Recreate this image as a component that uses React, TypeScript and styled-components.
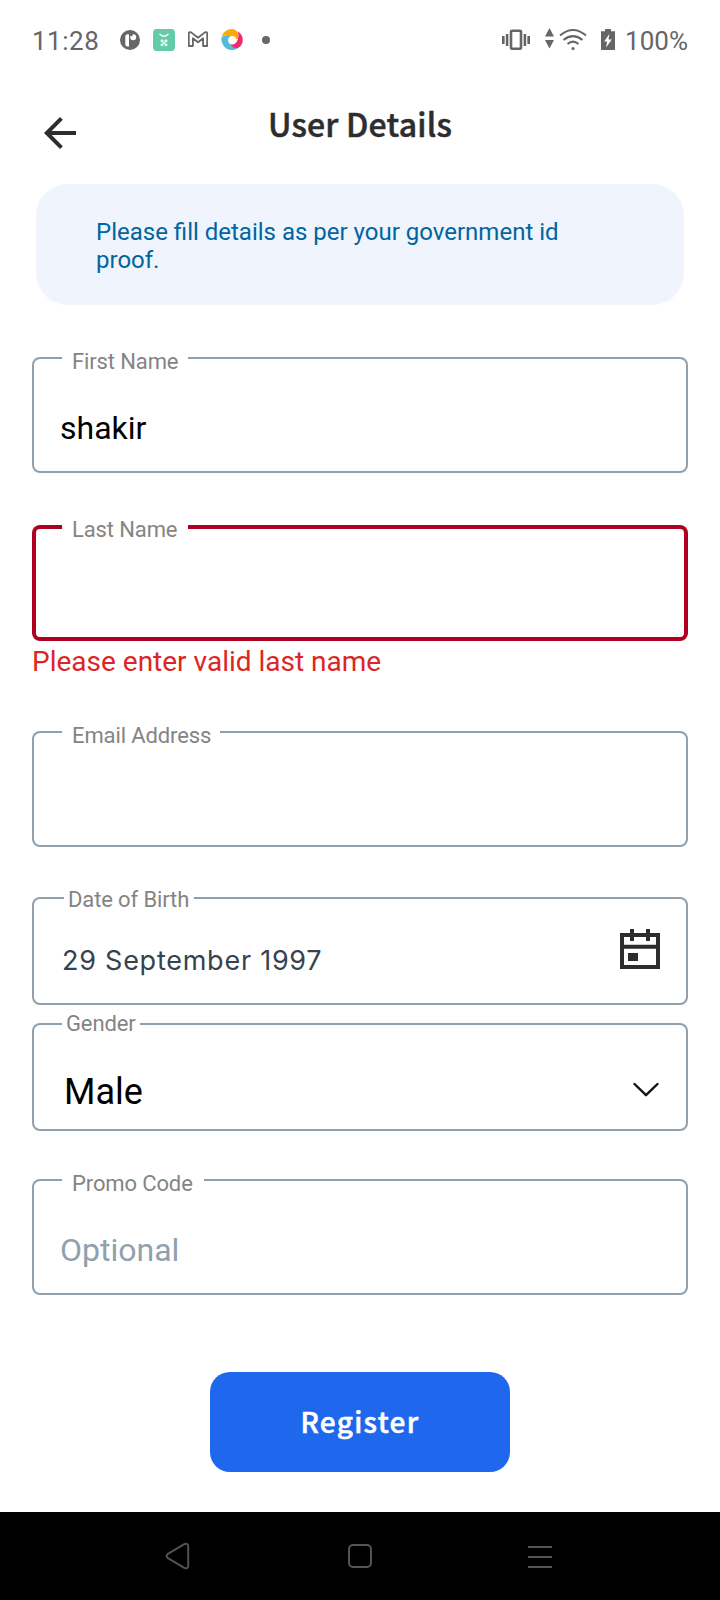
import React from "react";
import styled, { createGlobalStyle } from "styled-components";

const GlobalStyle = createGlobalStyle`
  * { box-sizing: border-box; }
  body { margin: 0; background: #fff; }
`;

const Screen = styled.div`
  width: 720px;
  height: 1600px;
  display: flex;
  flex-direction: column;
  background: #fff;
  font-family: Roboto, "Liberation Sans", sans-serif;
  overflow: hidden;
`;

const StatusBar = styled.div`
  height: 80px;
  padding: 2px 32px 0 32px;
  display: flex;
  align-items: center;
  justify-content: space-between;
  color: #666;
  font-size: 26px;
  line-height: 30px;
`;

const StatusGroup = styled.div`
  display: flex;
  align-items: center;
`;

const Clock = styled.span`
  width: 88px;
  letter-spacing: 0.5px;
`;

const StatusIcon = styled.svg<{ $w: number; $gap: number }>`
  display: block;
  flex: none;
  width: ${(p) => p.$w}px;
  height: 22px;
  margin: 0 ${(p) => p.$gap}px 2px 0;
`;

const Header = styled.header`
  height: 104px;
  padding: 0 36px;
  display: grid;
  grid-template-columns: 48px 1fr 48px;
  align-items: start;
`;

const BackButton = styled.button`
  width: 48px;
  height: 48px;
  margin-top: 29px;
  padding: 0;
  border: 0;
  background: none;
`;

const Title = styled.h1`
  margin: 19px 0 0;
  text-align: center;
  font: 500 32px/48px "Noto Sans CJK SC", "Noto Sans", sans-serif;
  letter-spacing: 0.2px;
  -webkit-text-stroke: 0.5px #2d2d2d;
  color: #2d2d2d;
  white-space: nowrap;
`;

const Notice = styled.p`
  height: 121px;
  margin: 0 36px;
  padding: 34px 100px 0 60px;
  border-radius: 32px;
  background: #eff4fd;
  color: #0065a0;
  font-size: 24px;
  line-height: 28px;
`;

const Form = styled.form`
  flex: 1;
  padding: 52px 32px 0;
  display: flex;
  flex-direction: column;
`;

const Field = styled.div<{ $height: number; $after: number; $error?: boolean }>`
  position: relative;
  flex: none;
  height: ${(p) => p.$height}px;
  margin-bottom: ${(p) => p.$after}px;
  border-radius: 8px;
  box-shadow: inset 0 0 0 ${(p) => (p.$error ? "4px #b00020" : "2px #90a0ad")};
  display: flex;
  justify-content: space-between;
`;

const Label = styled.label<{ $left?: number; $top?: number; $pad?: number; $width: number }>`
  position: absolute;
  left: ${(p) => p.$left ?? 30}px;
  top: ${(p) => p.$top ?? -7}px;
  width: ${(p) => p.$width}px;
  padding-left: ${(p) => p.$pad ?? 10}px;
  background: #fff;
  color: #848484;
  font-size: 22px;
  line-height: 24px;
  letter-spacing: -0.12px;
  white-space: nowrap;
`;

const Value = styled.span<{ $muted?: boolean }>`
  padding: 51px 0 0 28px;
  font-size: 32px;
  line-height: 40px;
  color: ${(p) => (p.$muted ? "#90a0ad" : "#000")};
`;

const DateValue = styled.span`
  padding: 46px 0 0 30px;
  font: 400 27px/36px Inter, sans-serif;
  letter-spacing: 0.75px;
  color: #36424e;
`;

const SelectValue = styled.span`
  padding: 49px 0 0 32px;
  font-size: 36px;
  line-height: 40px;
  color: #000;
`;

const FieldIcon = styled.svg<{ $top: number; $right: number }>`
  flex: none;
  margin: ${(p) => p.$top}px ${(p) => p.$right}px 0 0;
`;

const ErrorText = styled.p`
  height: 90px;
  margin: 0;
  padding-top: 4px;
  font-size: 28px;
  line-height: 33px;
  color: #dc2626;
`;

const RegisterButton = styled.button`
  flex: none;
  align-self: center;
  width: 300px;
  height: 100px;
  padding: 0 0 2px;
  border: 0;
  border-radius: 20px;
  background: #1f67ed;
  color: #fff;
  font: 500 28px/40px "Noto Sans CJK SC", "Noto Sans", sans-serif;
  letter-spacing: 1.3px;
  -webkit-text-stroke: 0.5px #fff;
`;

const NavBar = styled.nav`
  flex: none;
  height: 88px;
  padding: 0 168px;
  background: #000;
  display: flex;
  align-items: center;
  justify-content: space-between;
`;

const NavIcon = styled.svg`
  width: 24px;
  height: 28px;
  overflow: visible;
  fill: none;
  stroke: #535353;
  stroke-width: 2;
  stroke-linejoin: round;
`;

export default function App() {
  return (
    <>
      <GlobalStyle />
      <Screen>
        <StatusBar>
          <StatusGroup>
            <Clock>11:28</Clock>
            <StatusIcon $w={20} $gap={13} viewBox="0 0 20 22">
              <circle cx="10" cy="11" r="10" fill="#666" />
              <path d="M9 5.2v12.3H7.6a2.3 2.3 0 0 1-2.3-2.3V7.5A2.3 2.3 0 0 1 7.6 5.2Z" fill="#fff" />
              <circle cx="13.2" cy="8.200" r="3" fill="#fff" />
              <circle cx="11.500" cy="6" r="1.200" fill="#666" />
            </StatusIcon>
            <StatusIcon $w={22} $gap={13} viewBox="0 0 22 22">
              <rect width="22" height="22" rx="4" fill="#63cba7" />
              <path d="M6.5 5Q11 9.5 15.5 5" fill="none" stroke="#fff" strokeWidth="1.5" />
              <g fill="#e9faf4">
                <circle cx="9" cy="11.800" r="1.5" />
                <circle cx="13" cy="11.800" r="1.5" />
                <circle cx="9" cy="15.800" r="1.5" />
                <circle cx="13" cy="15.800" r="1.5" />
                <circle cx="11" cy="13.8" r="1.2" />
              </g>
            </StatusIcon>
            <StatusIcon $w={20} $gap={13} viewBox="0 0 20 22">
              <path
                d="M.8 4.9Q.8 2.2 3.1 3.4L10 8.7l6.9-5.3q2.3-1.2 2.3 1.5V17h-4.1V9.3L10 13.3 4.9 9.3V17H.8Z"
                fill="#fff"
                stroke="#666"
                strokeWidth="1.8"
                strokeLinejoin="round"
              />
            </StatusIcon>
            <StatusIcon $w={22} $gap={19} viewBox="0 0 22 22">
              <path d="M.5 8C2 3 6 .2 10.500 0c4.500 0 7.500 3 7.500 10H11L8 7C5.500 5.800 3 6 .5 8Z" fill="#fcaa0b" />
              <path d="M16.800 2.200C20.500 4.500 22.500 8.500 21.500 13c-1 5-5.500 8-12 6.500L9.500 14H15c2.800-4 3-8 1.800-11.800Z" fill="#ee2b70" />
              <path d="M.2 9C2.500 6 6 5.500 9 7v7c1.500 3.500 4 5.200 7.500 5.500C10 23.500.5 20 .2 9Z" fill="#54bcd6" />
              <circle cx="11.200" cy="11.200" r="4.200" fill="#fff" />
            </StatusIcon>
            <StatusIcon $w={8} $gap={0} viewBox="0 0 8 22">
              <circle cx="4" cy="11" r="4" fill="#666" />
            </StatusIcon>
          </StatusGroup>
          <StatusGroup>
            <StatusIcon $w={28} $gap={15} viewBox="0 0 28 22" fill="#666">
              <rect x="9" y="1.800" width="10" height="18" rx="1" fill="none" stroke="#666" strokeWidth="2.600" />
              <path d="M0 7h2.600v8H0zM3.800 5h2.600v12H3.800zM21.600 5h2.600v12h-2.600zM25.400 7H28v8h-2.600z" />
            </StatusIcon>
            <StatusIcon $w={9} $gap={5} viewBox="0 0 9 22" overflow="visible">
              <path d="M0 7.500 4.500-1 9 7.500ZM0 11h9l-4.500 8.500Z" fill="#666" />
            </StatusIcon>
            <StatusIcon $w={28} $gap={14} viewBox="0 0 28 22" fill="none" stroke="#666" strokeWidth="2">
              <path d="M1 6.500Q14-4.500 27 6.500M4.500 11Q14 3.200 23.500 11M8.500 15Q14 10.200 19.500 15" />
              <circle cx="14" cy="19.500" r="1.600" fill="#666" stroke="none" />
            </StatusIcon>
            <StatusIcon $w={14} $gap={10} viewBox="0 0 14 22">
              <path d="M4 0h6v2.200h4V21H0V2.200h4Z" fill="#666" />
              <path d="M8.300 5 3.200 12.500h3L5 18.500l5.800-8H7.500Z" fill="#fff" />
            </StatusIcon>
            <span>100%</span>
          </StatusGroup>
        </StatusBar>

        <Header>
          <BackButton type="button" aria-label="Back">
            <svg width="48" height="48" viewBox="0 0 24 24" fill="#2d2d2d">
              <path d="M20 11H7.830l5.590-5.590L12 4l-8 8 8 8 1.410-1.410L7.830 13H20v-2z" />
            </svg>
          </BackButton>
          <Title>User Details</Title>
        </Header>

        <Notice>Please fill details as per your government id proof.</Notice>

        <Form>
          <Field $height={116} $after={52}>
            <Label $width={126}>First Name</Label>
            <Value>shakir</Value>
          </Field>
          <Field $height={116} $after={0} $error>
            <Label $width={126}>Last Name</Label>
          </Field>
          <ErrorText>Please enter valid last name</ErrorText>
          <Field $height={116} $after={50}>
            <Label $width={158}>Email Address</Label>
          </Field>
          <Field $height={108} $after={18}>
            <Label $left={32} $top={-9} $pad={4} $width={130}>Date of Birth</Label>
            <DateValue>29 September 1997</DateValue>
            <FieldIcon $top={32} $right={28} width="40" height="40" viewBox="0 0 40 40">
              <path d="M2 6h36v32H2ZM2 17.800h36M12 0v12M28 0v12" fill="none" stroke="#2d2d2d" strokeWidth="4" />
              <rect x="8" y="24" width="10" height="8" fill="#2d2d2d" />
            </FieldIcon>
          </Field>
          <Field $height={108} $after={48}>
            <Label $top={-11} $pad={4} $width={78}>Gender</Label>
            <SelectValue>Male</SelectValue>
            <FieldIcon $top={58} $right={28} width="28" height="18" viewBox="0 0 28 18">
              <path d="M2.500 3 14 14.200 25.500 3" fill="none" stroke="#111" strokeWidth="2.400" strokeLinecap="round" strokeLinejoin="round" />
            </FieldIcon>
          </Field>
          <Field $height={116} $after={77}>
            <Label $width={142}>Promo Code</Label>
            <Value $muted>Optional</Value>
          </Field>
          <RegisterButton type="button">Register</RegisterButton>
        </Form>

        <NavBar>
          <NavIcon viewBox="0 0 24 28">
            <path d="M0 11.800 15.800 2.300Q19.800.500 20.200 4V24Q19.800 27.500 15.800 25.700L0 16.200Q-2.800 14 0 11.800Z" />
          </NavIcon>
          <NavIcon viewBox="0 0 24 28">
            <rect x="1" y="3" width="22" height="22" rx="4" />
          </NavIcon>
          <NavIcon viewBox="0 0 24 28">
            <path d="M0 5h24M0 15h24M0 25h24" />
          </NavIcon>
        </NavBar>
      </Screen>
    </>
  );
}
